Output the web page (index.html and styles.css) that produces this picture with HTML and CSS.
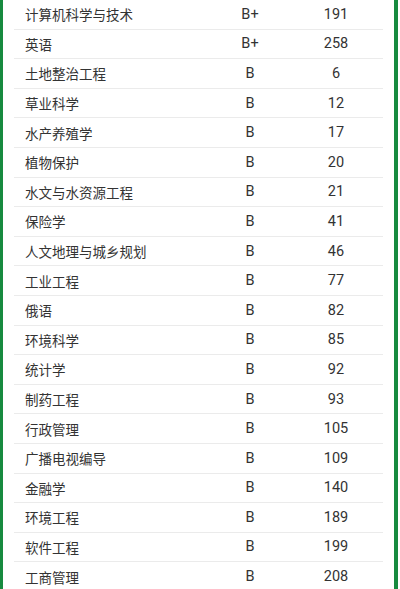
FILE: index.html
```html
<!DOCTYPE html>
<html lang="zh-CN">
<head>
<meta charset="utf-8">
<link rel="stylesheet" href="styles.css">
</head>
<body>
<div class="frame">
  <div class="table">
    <div class="row"><span class="name">计算机科学与技术</span><span class="grade">B+</span><span class="num">191</span></div>
    <div class="row"><span class="name">英语</span><span class="grade">B+</span><span class="num">258</span></div>
    <div class="row"><span class="name">土地整治工程</span><span class="grade">B</span><span class="num">6</span></div>
    <div class="row"><span class="name">草业科学</span><span class="grade">B</span><span class="num">12</span></div>
    <div class="row"><span class="name">水产养殖学</span><span class="grade">B</span><span class="num">17</span></div>
    <div class="row"><span class="name">植物保护</span><span class="grade">B</span><span class="num">20</span></div>
    <div class="row"><span class="name">水文与水资源工程</span><span class="grade">B</span><span class="num">21</span></div>
    <div class="row"><span class="name">保险学</span><span class="grade">B</span><span class="num">41</span></div>
    <div class="row"><span class="name">人文地理与城乡规划</span><span class="grade">B</span><span class="num">46</span></div>
    <div class="row"><span class="name">工业工程</span><span class="grade">B</span><span class="num">77</span></div>
    <div class="row"><span class="name">俄语</span><span class="grade">B</span><span class="num">82</span></div>
    <div class="row"><span class="name">环境科学</span><span class="grade">B</span><span class="num">85</span></div>
    <div class="row"><span class="name">统计学</span><span class="grade">B</span><span class="num">92</span></div>
    <div class="row"><span class="name">制药工程</span><span class="grade">B</span><span class="num">93</span></div>
    <div class="row"><span class="name">行政管理</span><span class="grade">B</span><span class="num">105</span></div>
    <div class="row"><span class="name">广播电视编导</span><span class="grade">B</span><span class="num">109</span></div>
    <div class="row"><span class="name">金融学</span><span class="grade">B</span><span class="num">140</span></div>
    <div class="row"><span class="name">环境工程</span><span class="grade">B</span><span class="num">189</span></div>
    <div class="row"><span class="name">软件工程</span><span class="grade">B</span><span class="num">199</span></div>
    <div class="row"><span class="name">工商管理</span><span class="grade">B</span><span class="num">208</span></div>
  </div>
</div>
</body>
</html>
```

FILE: styles.css
```css
html, body {
  margin: 0;
  padding: 0;
  background: #ffffff;
}
body {
  width: 400px;
  height: 589px;
  overflow: hidden;
  font-family: Roboto, "Noto Sans CJK SC", sans-serif;
  color: #333333;
}
.frame {
  width: 398px;
  box-sizing: border-box;
  border-left: 3px solid #178a3f;
  border-right: 4px solid #178a3f;
  padding: 0 11px;
  height: 600px;
}
.table {
  display: flex;
  flex-direction: column;
}
.row {
  display: grid;
  grid-template-columns: 191px 90px 82px 1fr;
  align-items: center;
  height: 29.6px;
  box-sizing: border-box;
  border-bottom: 1px solid #ebebeb;
  font-size: 13.5px;
}
.name {
  padding-left: 11px;
}
.grade, .num {
  text-align: center;
  font-size: 14.5px;
}
```
